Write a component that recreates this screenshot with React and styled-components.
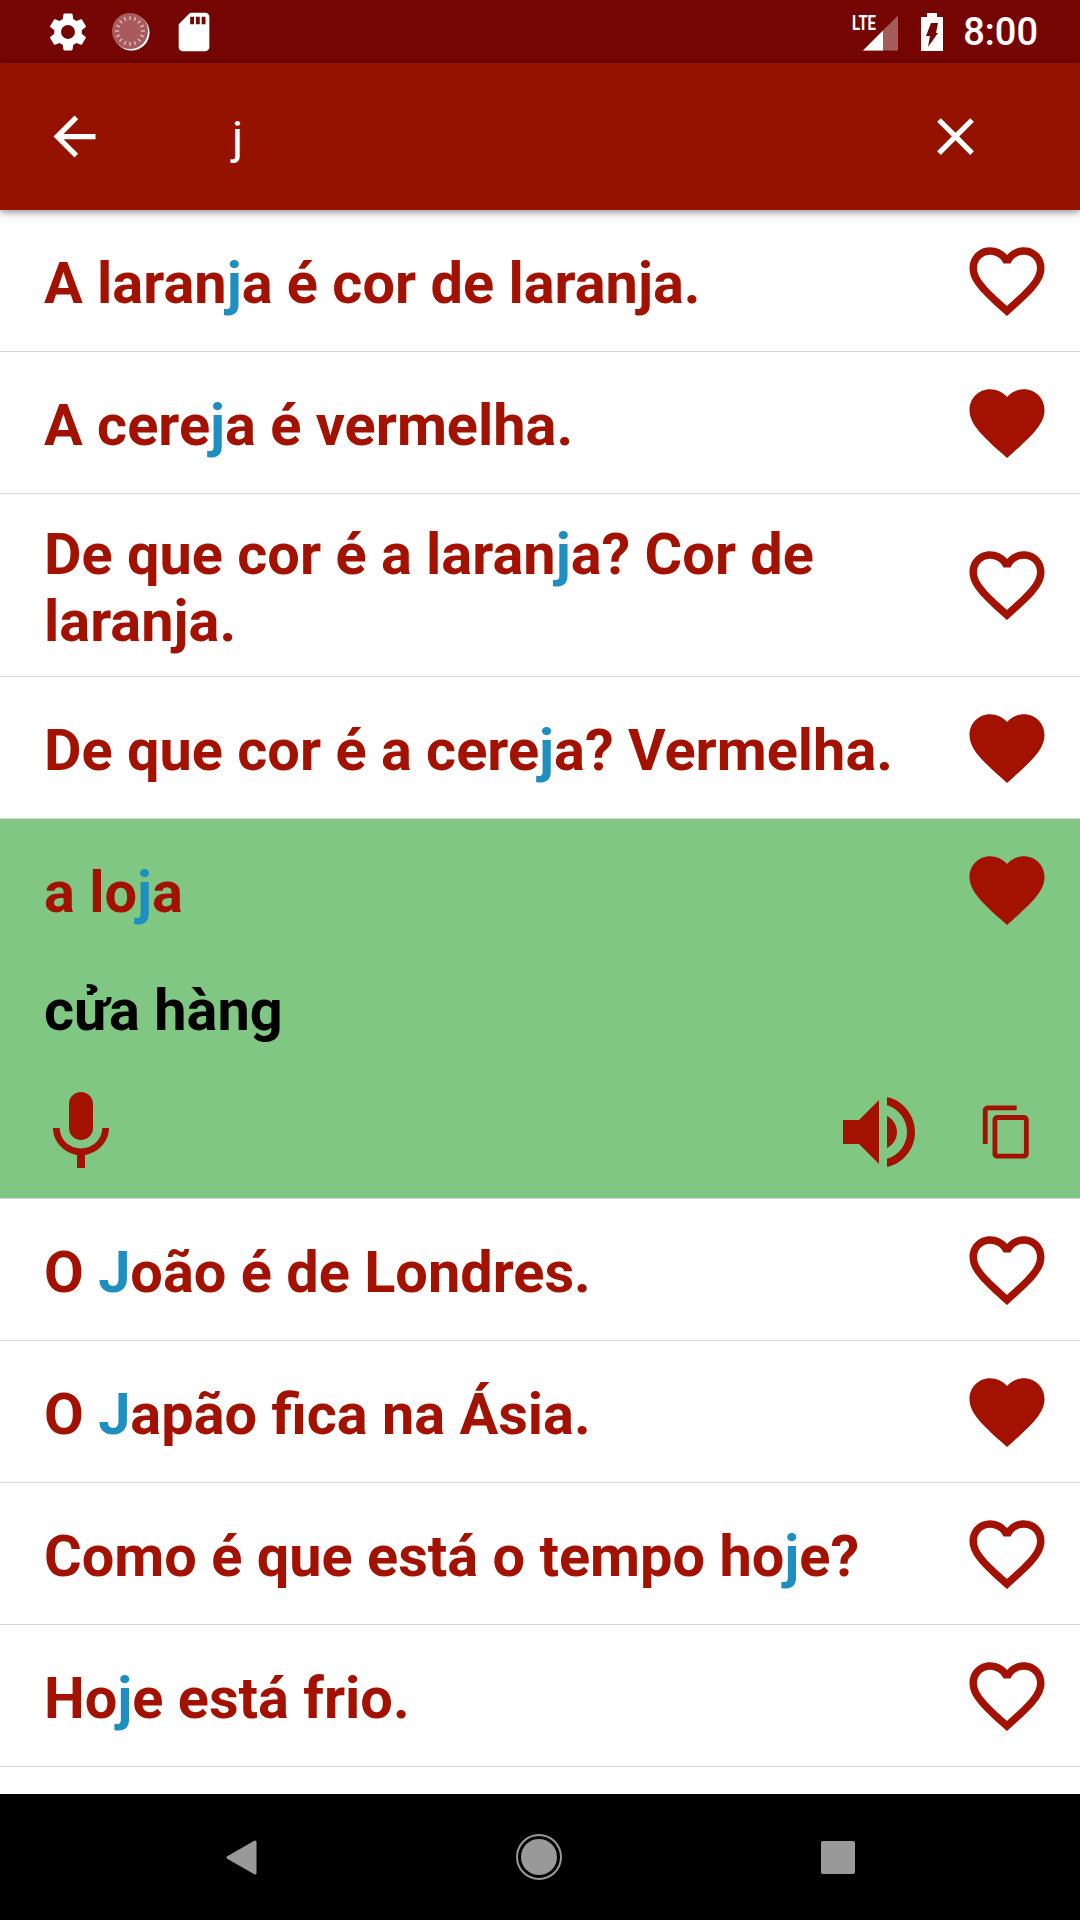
import React from "react";
import styled, { createGlobalStyle } from "styled-components";

const RED = "#a31200";

const paths = {
  heart:
    "M12 21.35l-1.45-1.32C5.4 15.36 2 12.28 2 8.5 2 5.42 4.42 3 7.5 3c1.74 0 3.41.81 4.5 2.09C13.09 3.81 14.76 3 16.5 3 19.58 3 22 5.42 22 8.5c0 3.78-3.4 6.86-8.55 11.54L12 21.35z",
  heartBorder:
    "M16.5 3c-1.74 0-3.41.81-4.5 2.09C10.91 3.81 9.24 3 7.5 3 4.42 3 2 5.42 2 8.5c0 3.78 3.4 6.86 8.55 11.54L12 21.35l1.45-1.32C18.6 15.36 22 12.28 22 8.5 22 5.42 19.58 3 16.5 3zm-4.4 15.55l-.1.1-.1-.1C7.14 14.24 4 11.39 4 8.5 4 6.5 5.5 5 7.5 5c1.54 0 3.04.99 3.57 2.36h1.87C13.46 5.99 14.96 5 16.5 5c2 0 3.5 1.5 3.5 3.5 0 2.89-3.14 5.74-7.9 10.05z",
  mic: "M12 14c1.66 0 2.99-1.34 2.99-3L15 5c0-1.66-1.34-3-3-3S9 3.34 9 5v6c0 1.66 1.34 3 3 3zm5.3-3c0 3-2.54 5.1-5.3 5.1S6.7 14 6.7 11H5c0 3.41 2.72 6.23 6 6.72V21h2v-3.28c3.28-.48 6-3.3 6-6.72h-1.7z",
  volume:
    "M3 9v6h4l5 5V4L7 9H3zm13.5 3c0-1.77-1.02-3.29-2.5-4.03v8.05c1.48-.73 2.5-2.25 2.5-4.02zM14 3.23v2.06c2.89.86 5 3.54 5 6.71s-2.11 5.85-5 6.71v2.06c4.01-.91 7-4.49 7-8.77s-2.99-7.86-7-8.77z",
  copy: "M16 1H4c-1.1 0-2 .9-2 2v14h2V3h12V1zm3 4H8c-1.1 0-2 .9-2 2v14c0 1.1.9 2 2 2h11c1.1 0 2-.9 2-2V7c0-1.1-.9-2-2-2zm0 16H8V7h11v14z",
  back: "M20 11H7.83l5.59-5.59L12 4l-8 8 8 8 1.41-1.41L7.83 13H20v-2z",
  close:
    "M19 6.41L17.59 5 12 10.59 6.41 5 5 6.41 10.59 12 5 17.59 6.41 19 12 13.41 17.59 19 19 17.59 13.41 12z",
  gear: "M19.14 12.94c.04-.3.06-.61.06-.94 0-.32-.02-.64-.07-.94l2.03-1.58c.18-.14.23-.41.12-.61l-1.92-3.32c-.12-.22-.37-.29-.59-.22l-2.39.96c-.5-.38-1.03-.7-1.62-.94l-.36-2.54c-.04-.24-.24-.41-.48-.41h-3.84c-.24 0-.43.17-.47.41l-.36 2.54c-.59.24-1.13.57-1.62.94l-2.39-.96c-.22-.08-.47 0-.59.22L2.74 8.87c-.12.21-.08.47.12.61l2.03 1.58c-.05.3-.09.63-.09.94s.02.64.07.94l-2.03 1.58c-.18.14-.23.41-.12.61l1.92 3.32c.12.22.37.29.59.22l2.39-.96c.5.38 1.03.7 1.62.94l.36 2.54c.05.24.24.41.48.41h3.84c.24 0 .44-.17.47-.41l.36-2.54c.59-.24 1.13-.56 1.62-.94l2.39.96c.22.08.47 0 .59-.22l1.92-3.32c.12-.22.07-.47-.12-.61l-2.01-1.58zM12 15.6c-1.98 0-3.6-1.62-3.6-3.6s1.62-3.6 3.6-3.6 3.6 1.62 3.6 3.6-1.62 3.6-3.6 3.6z",
  sd: "M18 2h-8L4.02 8 4 20c0 1.1.9 2 2 2h12c1.1 0 2-.9 2-2V4c0-1.1-.9-2-2-2zm-6 6h-2V4h2v4zm3 0h-2V4h2v4zm3 0h-2V4h2v4z",
};

const GlobalStyle = createGlobalStyle`
  html, body {
    margin: 0;
    padding: 0;
    background: #fff;
  }

  body {
    font-family: Roboto, "Liberation Sans", sans-serif;
  }
`;

const Screen = styled.div`
  width: 1080px;
  height: 1920px;
  display: flex;
  flex-direction: column;
  overflow: hidden;
`;

const StatusBar = styled.div`
  height: 63px;
  flex: none;
  background: #750503;
  display: flex;
  align-items: center;
  justify-content: space-between;
  padding: 0 42px 0 45px;
  color: #fff;
`;

const StatusGroup = styled.div`
  display: flex;
  align-items: center;
  gap: ${(props) => props.$gap}px;
`;

const SignalWrap = styled.div`
  margin-right: 3px;
  display: flex;
`;

const Clock = styled.span`
  font-size: 38px;
  font-weight: 500;
  line-height: 63px;
  padding-top: 1px;
`;

const Toolbar = styled.div`
  height: 147px;
  flex: none;
  background: #961200;
  display: flex;
  align-items: center;
  padding: 0 93px 0 43px;
  position: relative;
  z-index: 1;
  box-shadow: 0 2px 8px rgba(0, 0, 0, 0.45);
`;

const Query = styled.span`
  flex: 1;
  margin-left: 126px;
  padding-top: 3px;
  color: #fff;
  font-size: 47px;
  line-height: 56px;
`;

const List = styled.div`
  flex: 1;
  min-height: 0;
  background: #fff;
`;

const Row = styled.div`
  display: flex;
  align-items: center;
  min-height: 141px;
  padding: 0 28px 0 44px;
  box-sizing: border-box;
  gap: 24px;
`;

const Item = styled.div`
  border-bottom: 1px solid #d6d6d6;
  background: ${(props) => (props.$open ? "#81c784" : "transparent")};
`;

const Phrase = styled.div`
  flex: 1;
  min-width: 0;
  padding: 27px 0 21px;
  color: ${RED};
  font-size: 57.7px;
  font-weight: 700;
  line-height: 67px;
`;

const Match = styled.span`
  color: #1e8fc0;
`;

const Translation = styled.div`
  padding: 0 44px;
  color: #000;
  font-size: 57.7px;
  font-weight: 700;
  line-height: 67px;
  margin-top: 17px;
`;

const Actions = styled.div`
  display: flex;
  align-items: center;
  padding: 0 44px 18px 33px;
  margin-top: 40px;
`;

const Spacer = styled.div`
  flex: 1;
`;

const CopyWrap = styled.div`
  margin-left: 51px;
  display: flex;
`;

const NavBar = styled.div`
  height: 126px;
  flex: none;
  background: #000;
  display: flex;
  align-items: center;
  justify-content: space-between;
  padding: 0 225px 0 226px;
  box-sizing: border-box;
`;

const StyledIcon = styled.svg`
  flex: none;
  display: block;
  fill: ${(props) => props.$color};
`;

function Icon({ name, size, color = RED }) {
  return (
    <StyledIcon width={size} height={size} viewBox="0 0 24 24" $color={color}>
      <path d={paths[name]} />
    </StyledIcon>
  );
}

function Dial() {
  const ticks = Array.from({ length: 16 }, (_, i) => i * 22.5);
  return (
    <svg width="38" height="38" viewBox="0 0 38 38">
      <circle cx="19.5" cy="19.5" r="18" fill="#fff" />
      <circle cx="18" cy="18" r="18" fill="#a85a5c" />
      {ticks.map((deg) => (
        <line
          key={deg}
          x1="18"
          y1="3"
          x2="18"
          y2="7"
          stroke="#e0bcbc"
          strokeWidth="1.4"
          transform={`rotate(${deg} 18 18)`}
        />
      ))}
    </svg>
  );
}

function Signal() {
  return (
    <svg width="46" height="40" viewBox="0 0 46 40">
      <path d="M46 3.5v35H11z" fill="#fff" fillOpacity="0.35" />
      <path d="M31 18.5v20H11z" fill="#fff" />
      <text
        x="0"
        y="18"
        fill="#fff"
        fontFamily="Roboto, sans-serif"
        fontSize="21"
        fontWeight="700"
        textLength="24"
        lengthAdjust="spacingAndGlyphs"
      >
        LTE
      </text>
    </svg>
  );
}

function Battery() {
  return (
    <svg width="22" height="38" viewBox="0 0 22 38">
      <path
        fill="#fff"
        fillRule="evenodd"
        d="M6 0h10v4h6v34H0V4h6zM10 10h7l-2 10h2L7 34l2-11H5z"
      />
    </svg>
  );
}

function Highlighted({ text, query }) {
  const at = text.toLowerCase().indexOf(query);
  return (
    <>
      {text.slice(0, at)}
      <Match>{text.slice(at, at + query.length)}</Match>
      {text.slice(at + query.length)}
    </>
  );
}

const BackKey = styled.svg`
  display: block;
`;

const HomeKey = styled.div`
  width: 46px;
  height: 46px;
  box-sizing: border-box;
  border: 2px solid #999;
  border-radius: 50%;
  padding: 3px;

  &::after {
    content: "";
    display: block;
    height: 100%;
    border-radius: 50%;
    background: #999;
  }
`;

const RecentKey = styled.div`
  width: 34px;
  height: 33px;
  border-radius: 2px;
  background: #999;
`;

const items = [
  { text: "A laranja é cor de laranja." },
  { text: "A cereja é vermelha.", liked: true },
  { text: "De que cor é a laranja? Cor de laranja." },
  { text: "De que cor é a cereja? Vermelha.", liked: true },
  { text: "a loja", liked: true, translation: "cửa hàng" },
  { text: "O João é de Londres." },
  { text: "O Japão fica na Ásia.", liked: true },
  { text: "Como é que está o tempo hoje?" },
  { text: "Hoje está frio." },
];

export default function App() {
  return (
    <Screen>
      <GlobalStyle />
      <StatusBar>
        <StatusGroup $gap={21}>
          <Icon name="gear" size={46} color="#fff" />
          <Dial />
          <Icon name="sd" size={46} color="#fff" />
        </StatusGroup>
        <StatusGroup $gap={20}>
          <SignalWrap>
            <Signal />
          </SignalWrap>
          <Battery />
          <Clock>8:00</Clock>
        </StatusGroup>
      </StatusBar>
      <Toolbar>
        <Icon name="back" size={63} color="#fff" />
        <Query>j</Query>
        <Icon name="close" size={63} color="#fff" />
      </Toolbar>
      <List>
        {items.map((item) => (
          <Item key={item.text} $open={!!item.translation}>
            <Row>
              <Phrase>
                <Highlighted text={item.text} query="j" />
              </Phrase>
              <Icon name={item.liked ? "heart" : "heartBorder"} size={90} />
            </Row>
            {item.translation && (
              <>
                <Translation>{item.translation}</Translation>
                <Actions>
                  <Icon name="mic" size={96} />
                  <Spacer />
                  <Icon name="volume" size={96} />
                  <CopyWrap>
                    <Icon name="copy" size={58} />
                  </CopyWrap>
                </Actions>
              </>
            )}
          </Item>
        ))}
      </List>
      <NavBar>
        <BackKey width="31" height="35" viewBox="0 0 31 35">
          <path
            d="M29 2L2 17.5 29 33z"
            fill="#999"
            stroke="#999"
            strokeWidth="3"
            strokeLinejoin="round"
          />
        </BackKey>
        <HomeKey />
        <RecentKey />
      </NavBar>
    </Screen>
  );
}
